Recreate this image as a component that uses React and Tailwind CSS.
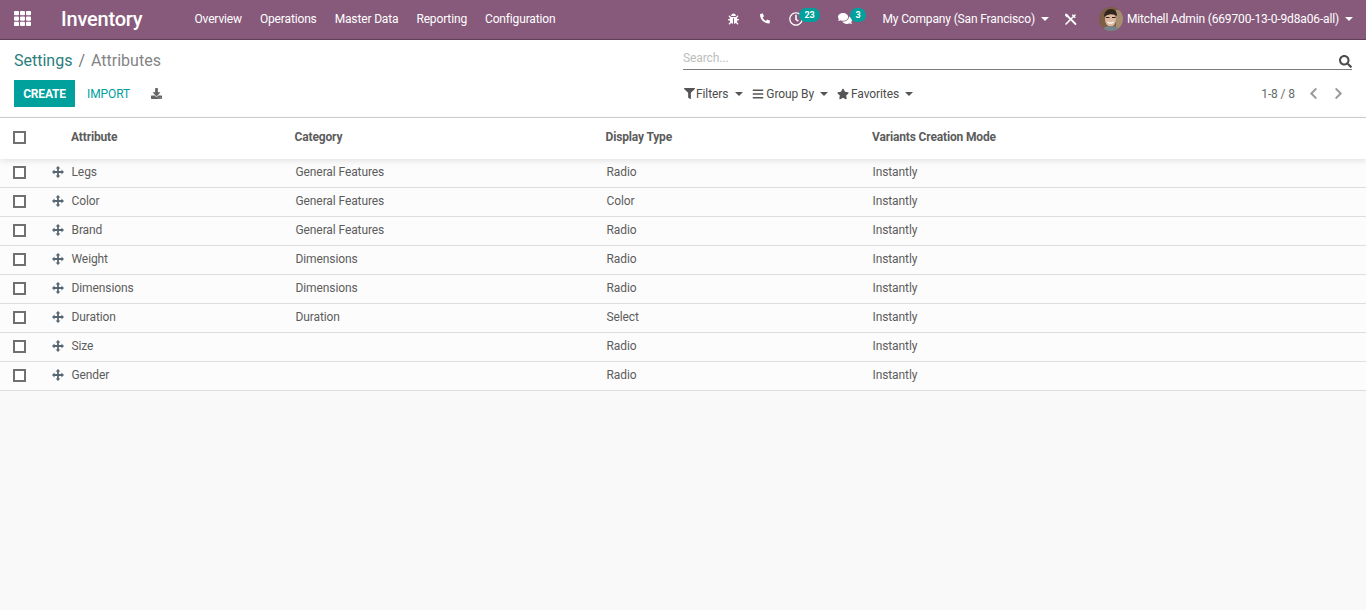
import { FaTh, FaBug, FaPhoneAlt, FaRegClock, FaComments, FaSearch, FaDownload, FaFilter, FaBars, FaStar, FaChevronLeft, FaChevronRight } from 'react-icons/fa'

const menus = ['Overview', 'Operations', 'Master Data', 'Reporting', 'Configuration']

const rows = [
  ['Legs', 'General Features', 'Radio'],
  ['Color', 'General Features', 'Color'],
  ['Brand', 'General Features', 'Radio'],
  ['Weight', 'Dimensions', 'Radio'],
  ['Dimensions', 'Dimensions', 'Radio'],
  ['Duration', 'Duration', 'Select'],
  ['Size', '', 'Radio'],
  ['Gender', '', 'Radio'],
]

function Caret({ className = '' }) {
  return <span className={`inline-block w-0 h-0 border-x-[4px] border-x-transparent border-t-[4px] ${className}`} />
}

function Checkbox() {
  return <span className="block w-[13px] h-[13px] border-2 border-[#707070] bg-white -ml-px" />
}

function MoveIcon() {
  return (
    <svg width="12" height="12" viewBox="0 0 12 12" className="text-[#566673]" fill="currentColor">
      <path d="M1.500 5.100h9v1.800h-9zM5.100 1.500h1.800v9H5.100z" />
      <path d="M6 0 8.400 2.500H3.600zM6 12 3.600 9.500h4.800zM0 6l2.500-2.400v4.800zM12 6 9.500 8.400V3.600z" />
    </svg>
  )
}

function ToolsIcon() {
  return (
    <svg width="13" height="13" viewBox="0 0 13 13" className="ml-[15px] mt-[1px]">
      <path d="M2 1.500 11.500 11" stroke="#fff" strokeWidth="1.800" strokeLinecap="round" />
      <path d="M11 2 2 11" stroke="#fff" strokeWidth="1.600" strokeLinecap="round" />
      <path d="M8.500 1 12 4.500 10.500 5 8 2.500z" fill="#fff" />
      <path d="M1 2.500 3 1 4.500 3 3 4.500z" fill="#fff" />
    </svg>
  )
}

function Avatar() {
  return (
    <svg width="24" height="24" viewBox="0 0 24 24" className="rounded-full">
      <rect width="24" height="24" fill="#7c5f45" />
      <rect x="17" y="3" width="7" height="21" fill="#a58f70" />
      <ellipse cx="11.500" cy="12.500" rx="5.500" ry="7" fill="#dcb79d" />
      <path d="M5 10c0-5 3-8 7-8s6 3 6 7c-3-2-8-3-13 1z" fill="#33261f" />
      <path d="M7 10.500h3.500M13 10.500h3.500" stroke="#2a2320" strokeWidth="1.200" />
      <path d="M8.500 15c2 1.500 4 1.500 6 0" stroke="#fff" strokeWidth="1.300" fill="none" />
      <path d="M3 24c1-4 5-5 9-5s8 1 9 5z" fill="#77858a" />
    </svg>
  )
}

function Navbar() {
  return (
    <header className="h-10 bg-[#875a7b] border-b border-[#5f4057] flex items-center text-white text-[12px] tracking-[-0.15px] pb-[2px]">
      <FaTh className="ml-[14px] w-[17px] h-[17px]" />
      <span className="ml-[30px] text-[20px] font-medium leading-none tracking-[-0.2px]">Inventory</span>
      <nav className="ml-[52px] flex gap-[18px]">
        {menus.map((m) => (
          <span key={m}>{m}</span>
        ))}
      </nav>
      <div className="ml-auto flex items-center">
        <FaBug className="w-[11px] h-[12px]" />
        <FaPhoneAlt className="ml-[21px] w-[10px] h-[11px]" />
        <span className="relative ml-[19px] block h-[14px]">
          <FaRegClock className="w-[14px] h-[14px]" />
          <span className="absolute -top-[4px] left-[10px] h-[14px] px-[5px] rounded-full bg-[#00a09d] text-[9px] font-bold leading-[14px] tracking-normal">23</span>
        </span>
        <span className="relative ml-[35px] block h-[13px]">
          <FaComments className="w-[14px] h-[13px]" />
          <span className="absolute -top-[4px] left-[12px] h-[14px] px-[5px] rounded-full bg-[#00a09d] text-[9px] font-bold leading-[14px] tracking-normal">3</span>
        </span>
        <span className="ml-[30px]">My Company (San Francisco)</span>
        <Caret className="ml-[6px] border-t-white" />
        <ToolsIcon />
        <span className="ml-[22px] block h-[24px]"><Avatar /></span>
        <span className="ml-[4px]">Mitchell Admin (669700-13-0-9d8a06-all)</span>
        <Caret className="ml-[6px] mr-[13px] border-t-white" />
      </div>
    </header>
  )
}

function ControlPanel() {
  return (
    <div className="h-[78px] bg-white border-b border-[#cfcfcf] px-[14px] pt-[9px] text-[12px] text-[#4c4c4c] tracking-[-0.1px]">
      <div className="flex h-[23px] items-start">
        <div className="text-[16px] leading-[23px] w-[669px] tracking-normal">
          <span className="text-[#2a7d7c]">Settings</span>
          <span className="text-[#777] mx-[6px]">/</span>
          <span className="text-[#848484]">Attributes</span>
        </div>
        <div className="flex-1 border-b border-[#7c7c7c] h-[21px] flex justify-between items-start">
          <span className="text-[#bdbdbd] leading-[18px]">Search...</span>
          <FaSearch className="mt-[6px] w-[13px] h-[13px] text-[#4c4c4c]" />
        </div>
      </div>
      <div className="flex items-center mt-[8px] h-[27px]">
        <div className="flex items-center w-[669px]">
          <button className="h-[27px] w-[61px] bg-[#00a09d] text-white font-bold tracking-[-0.2px]">CREATE</button>
          <span className="ml-[12px] text-[#00a09d]">IMPORT</span>
          <FaDownload className="ml-[21px] w-[11px] h-[11px] text-[#666]" />
        </div>
        <div className="flex items-center flex-1">
          <FaFilter className="w-[11px] h-[11px] text-[#555] ml-px" />
          <span className="ml-[1px]">Filters</span>
          <Caret className="ml-[7px] border-t-[#555]" />
          <FaBars className="ml-[9px] w-[12px] h-[12px] text-[#555]" />
          <span className="ml-[2px]">Group By</span>
          <Caret className="ml-[6px] border-t-[#555]" />
          <FaStar className="ml-[9px] w-[12px] h-[12px] text-[#555]" />
          <span className="ml-[2px]">Favorites</span>
          <Caret className="ml-[6px] border-t-[#555]" />
          <span className="ml-auto text-[#5f6b6b]">1-8 / 8</span>
          <FaChevronLeft className="ml-[12px] w-[13px] h-[13px] text-[#9a9a9a]" />
          <FaChevronRight className="ml-[12px] mr-[7px] w-[13px] h-[13px] text-[#9a9a9a]" />
        </div>
      </div>
    </div>
  )
}

function AttributeTable() {
  return (
    <div className="text-[12px] text-[#5c5c5c] tracking-[-0.1px]">
      <div className="relative h-[41px] bg-white flex items-center font-bold tracking-[-0.15px] pb-[2px] shadow-[0_2px_6px_rgba(0,0,0,0.1)]">
        <span className="w-[71px] pl-[14px]"><Checkbox /></span>
        <span className="w-[223.500px] mb-[2px]">Attribute</span>
        <span className="w-[311px] mb-[2px]">Category</span>
        <span className="w-[266.500px] mb-[2px]">Display Type</span>
        <span className="mb-[2px]">Variants Creation Mode</span>
      </div>
      {rows.map(([name, category, type]) => (
        <div key={name} className="h-[29px] flex items-center border-b border-[#dedede] bg-[#fcfcfc] pb-[2px]">
          <span className="w-[52px] pl-[14px]"><Checkbox /></span>
          <MoveIcon />
          <span className="w-[224px] ml-[7.500px]">{name}</span>
          <span className="w-[311px]">{category}</span>
          <span className="w-[266px]">{type}</span>
          <span>Instantly</span>
        </div>
      ))}
    </div>
  )
}

export default function App() {
  return (
    <div className="h-[610px] overflow-hidden bg-[#f9f9f9] font-['Roboto',sans-serif]">
      <Navbar />
      <ControlPanel />
      <AttributeTable />
    </div>
  )
}
